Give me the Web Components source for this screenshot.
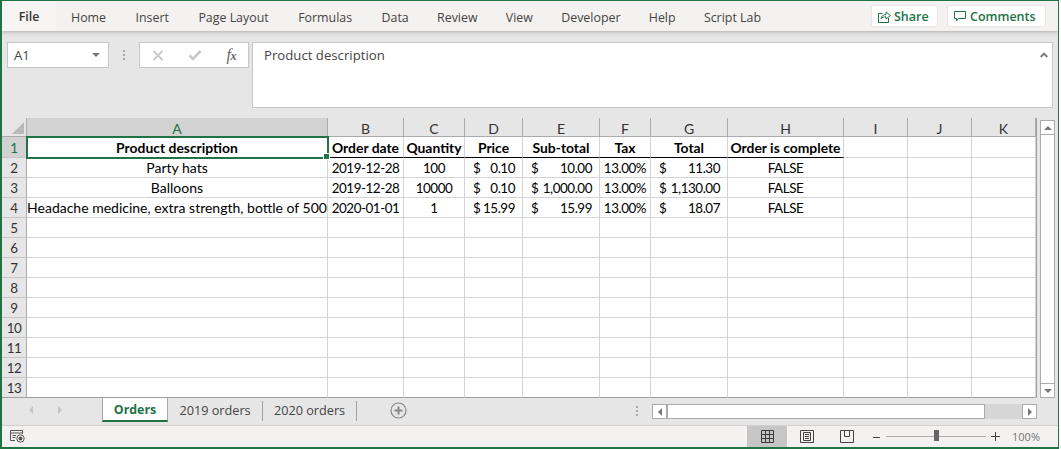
<!DOCTYPE html>
<html>
<head>
<meta charset="utf-8">
<title>Orders</title>
<style>
  html, body { margin: 0; padding: 0; background: #fff; overflow: hidden; }
  body { font-family: "Open Sans", "Liberation Sans", sans-serif; }
</style>
</head>
<body>
<excel-window>
  <excel-ribbon></excel-ribbon>
  <excel-formula-bar cell="A1">Product description</excel-formula-bar>
  <excel-sheet></excel-sheet>
  <excel-tabs></excel-tabs>
  <excel-status></excel-status>
</excel-window>

<script>
const GREEN = '#217346';

class ExcelWindow extends HTMLElement {
    constructor() {
        super();
        this.attachShadow({ mode: 'open' });
        this.shadowRoot.innerHTML = `
            <style>
                :host {
                    display: flex;
                    flex-direction: column;
                    box-sizing: border-box;
                    width: 1059px;
                    height: 449px;
                    border: solid ${GREEN};
                    border-width: 1px 1px 2px 2px;
                    background: #e6e6e6;
                    overflow: hidden;
                }
            </style>
            <slot></slot>
        `;
    }
}

class ExcelRibbon extends HTMLElement {
    constructor() {
        super();
        this.attachShadow({ mode: 'open' });
        const tabs = ['Home', 'Insert', 'Page Layout', 'Formulas', 'Data', 'Review', 'View', 'Developer', 'Help', 'Script Lab'];
        this.shadowRoot.innerHTML = `
            <style>
                :host {
                    display: flex;
                    align-items: center;
                    height: 30px;
                    flex: none;
                    background: #f3f2f1;
                    box-shadow: 0 1px 4px rgba(0,0,0,.25);
                    position: relative;
                    font-size: 12.4px;
                    color: #444;
                }
                .file {
                    width: 54px;
                    height: 30px;
                    line-height: 32px;
                    text-align: center;
                    background: #f6f5f4;
                    font-weight: 600;
                    color: #333;
                }
                nav { display: flex; gap: 28.3px; margin-left: 15px; flex: 1; padding-top: 2px; }
                nav span:nth-child(-n+4) { margin-right: 1.2px; }
                .btn {
                    box-sizing: border-box;
                    display: flex;
                    align-items: center;
                    align-self: flex-start;
                    height: 22px;
                    margin-top: 4px;
                    padding-left: 6px;
                    background: #fff;
                    border: 1px solid #e6e6e6;
                    border-radius: 2px;
                    color: ${GREEN};
                    font-weight: 600;
                    font-size: 12.5px;
                }
                .share { width: 67px; margin-right: 9px; gap: 3px; }
                .comments { width: 99px; margin-right: 12px; gap: 4px; }
                svg { display: block; }
            </style>
            <div class="file">File</div>
            <nav>${tabs.map(t => `<span>${t}</span>`).join('')}</nav>
            <div class="btn share">
                <svg width="13" height="13" viewBox="0 0 13 13" fill="none" stroke="${GREEN}"><path d="M4.5 3.5H.5V12.5H10.5V8"/><path d="M3 8.5C3.5 6 5.5 4.5 8 4.5V2L12.5 5.5L8 9V6.8C6 6.8 4.5 7.2 3 8.5Z"/></svg>
                Share
            </div>
            <div class="btn comments">
                <svg width="12" height="11" viewBox="0 0 12 11" fill="none" stroke="${GREEN}"><path d="M.5 .5H11.5V7.5H4.5L2.5 10V7.5H.5Z"/></svg>
                Comments
            </div>
        `;
    }
}

class ExcelFormulaBar extends HTMLElement {
    constructor() {
        super();
        this.attachShadow({ mode: 'open' });
        this.shadowRoot.innerHTML = `
            <style>
                :host {
                    display: flex;
                    align-items: flex-start;
                    flex: none;
                    height: 87px;
                    padding: 11px 5px 0 5px;
                    box-sizing: border-box;
                    font-size: 13.2px;
                    color: #444;
                }
                .box { box-sizing: border-box; background: #fff; border: 1px solid #c6c6c6; }
                .name {
                    display: flex;
                    align-items: center;
                    justify-content: space-between;
                    width: 102px;
                    height: 26px;
                    padding: 0 6px;
                }
                .caret { width: 0; height: 0; border: 4px solid transparent; border-top: 4px solid #777; border-bottom: 0; margin-right: 2px; }
                .grip { width: 30px; display: flex; flex-direction: column; align-items: center; gap: 2px; padding-top: 8px; box-sizing: border-box; height: 26px; }
                .grip i { width: 2px; height: 2px; background: #aaa; }
                .controls {
                    display: flex;
                    align-items: center;
                    justify-content: space-between;
                    width: 110px;
                    height: 26px;
                    padding: 0 12px;
                }
                .fx { font: italic 16px "Liberation Serif", serif; color: #666; letter-spacing: -.5px; line-height: 1; }
                .fx small { font-size: 12px; font-weight: bold; }
                .text {
                    position: relative;
                    flex: 1;
                    height: 66px;
                    margin-left: 3px;
                    padding: 3px 11px;
                }
                .up { position: absolute; right: 4px; top: 9px; }
            </style>
            <div class="box name"><span>${this.getAttribute('cell')}</span><div class="caret"></div></div>
            <div class="grip"><i></i><i></i><i></i></div>
            <div class="box controls">
                <svg width="12" height="11" viewBox="0 0 12 11" stroke="#c8c8c8" stroke-width="1.8" fill="none"><path d="M1.5 1L10.5 10M10.5 1L1.5 10"/></svg>
                <svg width="14" height="12" viewBox="0 0 14 12" stroke="#c8c8c8" stroke-width="2.6" fill="none"><path d="M1.5 6.5L5 10L12.5 2"/></svg>
                <span class="fx">f<small>x</small></span>
            </div>
            <div class="box text"><slot></slot>
                <svg class="up" width="8" height="6" viewBox="0 0 8 6" stroke="#777" stroke-width="1.8" fill="none"><path d="M.7 5L4 1.6L7.3 5"/></svg>
            </div>
        `;
    }
}

class ExcelSheet extends HTMLElement {
    constructor() {
        super();
        this.attachShadow({ mode: 'open' });
        const cols = [['A',301],['B',76],['C',61],['D',58],['E',77],['F',51],['G',77],['H',116],['I',64],['J',64],['K',64]];
        const data = {
            1: ['Product description','Order date','Quantity','Price','Sub-total','Tax','Total','Order is complete'],
            2: ['Party hats','2019-12-28','100',['$','0.10'],['$','10.00'],'13.00%',['$','11.30'],'FALSE'],
            3: ['Balloons','2019-12-28','10000',['$','0.10'],['$','1,000.00'],'13.00%',['$','1,130.00'],'FALSE'],
            4: ['Headache medicine, extra strength, bottle of 500','2020-01-01','1',['$','15.99'],['$','15.99'],'13.00%',['$','18.07'],'FALSE'],
        };
        let rows = '';
        for (let r = 1; r <= 13; r++) {
            const last = r === 13 ? 'last' : '';
            rows += `<div class="rh ${r === 1 ? 'on' : ''} ${last}"><span class="num">${r}</span></div>`;
            cols.forEach((c, i) => {
                const v = data[r] ? data[r][i] : undefined;
                let inner = '';
                let cls = `cell ${last}`;
                if (Array.isArray(v)) {
                    cls += ' acc';
                    inner = `<span class="num">${v[0]}</span><span class="num">${v[1]}</span>`;
                } else if (v !== undefined) {
                    inner = `<span class="${r > 1 && i > 0 ? 'num' : ''}">${v}</span>`;
                }
                if (r === 1 && i < 8) cls += ' head';
                if (r === 1 && i === 0) cls += ' sel';
                rows += `<div class="${cls}">${inner}</div>`;
            });
        }
        this.shadowRoot.innerHTML = `
            <style>
                :host {
                    display: flex;
                    flex: none;
                    height: 280px;
                    font-family: Lato, "Liberation Sans", sans-serif;
                    font-size: 14px;
                    color: #000;
                }
                .grid {
                    display: grid;
                    grid-template-columns: 25px ${cols.map(c => c[1] + 'px').join(' ')};
                    grid-template-rows: 19px 21px repeat(12, 20px);
                    width: 1034px;
                    flex: none;
                    background: #fff;
                    border-right: 1px solid #a0a0a0;
                    overflow: hidden;
                }
                .num { font-size: 13.4px; letter-spacing: -.45px; }
                .corner { background: #e6e6e6; position: relative; border-bottom: 1px solid #ababab; border-right: 1px solid #ababab; box-sizing: border-box; }
                .corner::after {
                    content: '';
                    position: absolute;
                    right: 2px; bottom: 2px;
                    border: 6px solid #b9b9b9;
                    border-top-color: transparent;
                    border-left-color: transparent;
                }
                .ch, .rh {
                    display: flex;
                    align-items: center;
                    justify-content: center;
                    box-sizing: border-box;
                    background: #e6e6e6;
                    color: #333;
                }
                .ch { border-right: 1px solid #ababab; border-bottom: 1px solid #ababab; padding-top: 2px; }
                .ch.on { background: #d2d2d2; color: ${GREEN}; }
                .rh { border-right: 1px solid #ababab; border-bottom: 1px solid #c6c6c6; }
                .rh.on { background: #d2d2d2; color: ${GREEN}; padding-top: 1px; }
                .cell {
                    box-sizing: border-box;
                    display: flex;
                    align-items: center;
                    justify-content: center;
                    white-space: nowrap;
                    border-right: 1px solid #d4d4d4;
                    border-bottom: 1px solid #d4d4d4;
                    min-width: 0;
                }
                .acc { justify-content: space-between; padding: 0 7px 0 8px; }
                .head { font-weight: 700; font-size: 13.9px; border-bottom: 1px solid #000; padding-top: 1px; }
                .last { border-bottom-color: #9f9f9f; }
                .sel { position: relative; outline: 2px solid ${GREEN}; outline-offset: -1px; z-index: 1; }
                .sel::after {
                    content: '';
                    position: absolute;
                    right: -3px; bottom: -3px;
                    width: 5px; height: 5px;
                    background: ${GREEN};
                    border: 1px solid #fff;
                }
                .bar {
                    flex: 1;
                    display: flex;
                    flex-direction: column;
                    padding: 2px 0 0 3px;
                    box-sizing: border-box;
                }
                .arrow {
                    box-sizing: border-box;
                    width: 15px; height: 15px;
                    flex: none;
                    background: #fff;
                    border: 1px solid #ababab;
                    display: flex;
                    align-items: center;
                    justify-content: center;
                }
                .track { flex: 1; width: 15px; background: #fff; border: 1px solid #ababab; border-top: 0; border-bottom: 0; box-sizing: border-box; }
                .tri { width: 0; height: 0; border: 4px solid transparent; }
                .tri.up { border-bottom: 4px solid #777; border-top: 0; }
                .tri.down { border-top: 4px solid #777; border-bottom: 0; }
            </style>
            <div class="grid">
                <div class="corner"></div>
                ${cols.map((c, i) => `<div class="ch ${i === 0 ? 'on' : ''}">${c[0]}</div>`).join('')}
                ${rows}
            </div>
            <div class="bar">
                <div class="arrow"><div class="tri up"></div></div>
                <div class="track"></div>
                <div class="arrow"><div class="tri down"></div></div>
            </div>
        `;
    }
}

class ExcelTabs extends HTMLElement {
    constructor() {
        super();
        this.attachShadow({ mode: 'open' });
        this.shadowRoot.innerHTML = `
            <style>
                :host {
                    display: flex;
                    align-items: flex-start;
                    flex: none;
                    height: 28px;
                    box-sizing: border-box;
                    border-bottom: 1px solid #d0d0d0;
                    font-size: 12.7px;
                    color: #444;
                    background: #e6e6e6;
                }
                .nav { width: 100px; height: 24px; display: flex; align-items: center; gap: 25px; padding-left: 27px; box-sizing: border-box; }
                .t { width: 0; height: 0; border: 4px solid transparent; }
                .t.l { border-right: 4px solid #c4c4c4; border-left: 0; }
                .t.r { border-left: 4px solid #c4c4c4; border-right: 0; }
                .tab { display: flex; align-items: center; justify-content: center; height: 20px; margin-top: 3px; padding-bottom: 2px; box-sizing: border-box; border-right: 1px solid #a0a0a0; }
                .active {
                    width: 66px; height: 24px; margin-top: 0; padding: 1px 0 0;
                    background: #fff;
                    color: ${GREEN};
                    font-weight: 700;
                    font-size: 12.4px;
                    border: solid #a8a8a8;
                    border-width: 0 1px 0 1px;
                    border-bottom: 2px solid ${GREEN};
                }
                .w1 { width: 95px; }
                .w2 { width: 94px; }
                .add { margin: 4px 0 0 33px; }
                .spacer { flex: 1; }
                .grip { width: 2px; display: flex; flex-direction: column; gap: 2px; padding-top: 8px; margin-right: 14px; }
                .grip i { width: 2px; height: 2px; background: #aaa; display: block; }
                .hbar { display: flex; align-items: center; width: 385px; height: 15px; margin: 6px 21px 0 0; }
                .hbar b { box-sizing: border-box; width: 15px; height: 15px; background: #fff; border: 1px solid #ababab; display: flex; align-items: center; justify-content: center; flex: none; }
                .thumb { box-sizing: border-box; height: 15px; width: 318px; background: #fff; border: 1px solid #ababab; flex: none; }
                .rest { flex: 1; height: 15px; background: #d6d6d6; }
                .a { width: 0; height: 0; border: 4px solid transparent; }
                .a.l { border-right: 4px solid #777; border-left: 0; }
                .a.r { border-left: 4px solid #777; border-right: 0; }
            </style>
            <div class="nav"><i class="t l"></i><i class="t r"></i></div>
            <div class="tab active">Orders</div>
            <div class="tab w1">2019 orders</div>
            <div class="tab w2">2020 orders</div>
            <svg class="add" width="17" height="17" viewBox="0 0 17 17" fill="none" stroke="#888"><circle cx="8.5" cy="8.5" r="7.5" stroke-width="1.2"/><path d="M8.5 4.5V12.5M4.5 8.5H12.5" stroke-width="2"/></svg>
            <div class="spacer"></div>
            <div class="grip"><i></i><i></i><i></i></div>
            <div class="hbar"><b><i class="a l"></i></b><div class="thumb"></div><div class="rest"></div><b><i class="a r"></i></b></div>
        `;
    }
}

class ExcelStatus extends HTMLElement {
    constructor() {
        super();
        this.attachShadow({ mode: 'open' });
        this.shadowRoot.innerHTML = `
            <style>
                :host {
                    display: flex;
                    align-items: center;
                    flex: 1;
                    background: #f3f2f1;
                    font-size: 11px;
                    color: #777;
                }
                svg { display: block; }
                .macro { margin-left: 8px; }
                .spacer { flex: 1; }
                .view { width: 40px; height: 100%; display: flex; align-items: center; justify-content: center; }
                .view.on { background: #c6c6c6; }
                .zoom { display: flex; align-items: center; margin-left: 6px; }
                .line { width: 100px; height: 1px; background: #aaa; margin: 0 5px 0 6px; position: relative; }
                .line::after { content: ''; position: absolute; left: 48px; top: -6px; width: 5px; height: 11px; background: #666; }
                .pct { margin: 0 18px 0 12px; }
            </style>
            <svg class="macro" width="15" height="13" viewBox="0 0 15 13" fill="none" stroke="#555"><path d="M5 10.5H.5V.5H12.5V4"/><path d="M.5 3H12.5M2.5 5.5H6M2.5 7.5H5.5"/><circle cx="10.5" cy="8.5" r="3.7"/><circle cx="10.5" cy="8.5" r="2" fill="#555" stroke="none"/></svg>
            <div class="spacer"></div>
            <div class="view on"><svg width="13" height="13" viewBox="0 0 13 13" fill="none" stroke="#3a3a3a"><path d="M.5.5H12.5V12.5H.5ZM.5 4.5H12.5M.5 8.5H12.5M4.5.5V12.5M8.5.5V12.5"/></svg></div>
            <div class="view"><svg width="14" height="13" viewBox="0 0 14 13" fill="none" stroke="#444"><path d="M.5.5H13.5V12.5H.5ZM3.5 2.5H10.5V10.5H3.5ZM5 4.5H9M5 6.5H9M5 8.5H9"/></svg></div>
            <div class="view"><svg width="14" height="13" viewBox="0 0 14 13" fill="none" stroke="#444"><path d="M.5.5H13.5V12.5H.5ZM4.5.5V6.5H9.5V.5"/></svg></div>
            <div class="zoom">
                <svg width="7" height="8" viewBox="0 0 7 8" stroke="#444"><path d="M0 4.5H7"/></svg>
                <div class="line"></div>
                <svg width="9" height="9" viewBox="0 0 9 9" stroke="#444"><path d="M0 4.5H9M4.5 0V9"/></svg>
            </div>
            <span class="pct">100%</span>
        `;
    }
}

customElements.define('excel-window', ExcelWindow);
customElements.define('excel-ribbon', ExcelRibbon);
customElements.define('excel-formula-bar', ExcelFormulaBar);
customElements.define('excel-sheet', ExcelSheet);
customElements.define('excel-tabs', ExcelTabs);
customElements.define('excel-status', ExcelStatus);
</script>
</body>
</html>
